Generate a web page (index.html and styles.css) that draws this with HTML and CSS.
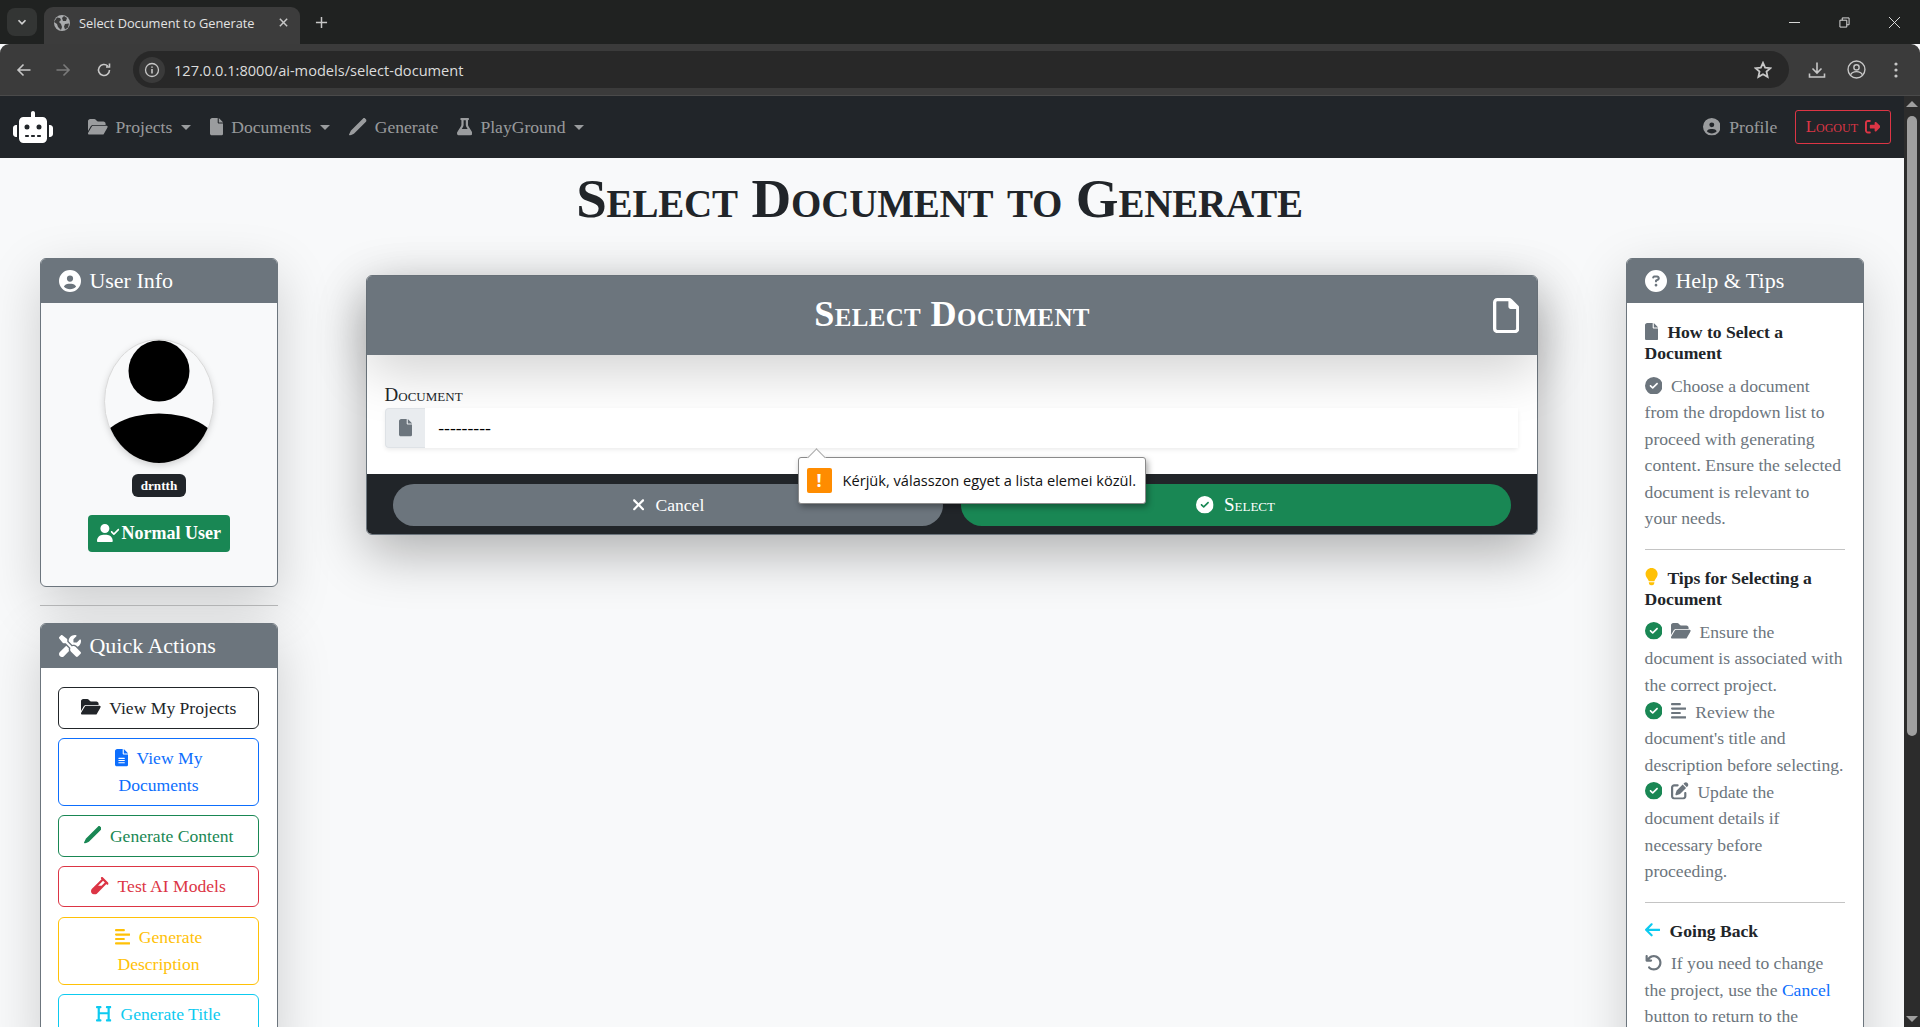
FILE: index.html
```html
<!DOCTYPE html>
<html lang="en">
<head>
<meta charset="utf-8">
<title>Select Document to Generate</title>
<link rel="stylesheet" href="styles.css">
</head>
<body>
<svg class="sprite" xmlns="http://www.w3.org/2000/svg">
<symbol id="file" viewBox="0 0 384 512"><path d="M0 64C0 28.7 28.7 0 64 0H224V128c0 17.7 14.3 32 32 32H384V448c0 35.3-28.7 64-64 64H64c-35.3 0-64-28.7-64-64V64zm384 64H256V0L384 128z"/></symbol>
<symbol id="file-o" viewBox="0 0 384 512"><path d="M320 464c8.8 0 16-7.2 16-16V160H256c-17.7 0-32-14.3-32-32V48H64c-8.8 0-16 7.2-16 16V448c0 8.8 7.2 16 16 16H320zM0 64C0 28.7 28.7 0 64 0H229.5c17 0 33.3 6.7 45.3 18.7l90.5 90.5c12 12 18.7 28.3 18.7 45.3V448c0 35.3-28.7 64-64 64H64c-35.3 0-64-28.7-64-64V64z"/></symbol>
<symbol id="folder" viewBox="0 0 576 512"><path d="M88.7 223.8L0 375.8V96C0 60.7 28.7 32 64 32H181.5c17 0 33.3 6.7 45.3 18.7l26.5 26.5c18 18 42.4 28.1 67.9 28.1H448c35.3 0 64 28.7 64 64v32H144c-22.8 0-43.8 12.1-55.3 31.8zm27.6 16.1C122.1 230 132.6 224 144 224H544c11.5 0 22 6.1 27.7 16.1s5.7 22.2-.1 32.1l-112 192C453.9 474 443.4 480 432 480H32c-11.5 0-22-6.1-27.7-16.1s-5.7-22.2 .1-32.1l112-192z"/></symbol>
<symbol id="user" viewBox="0 0 512 512"><path d="M399 384.2C376.9 345.8 335.4 320 288 320H224c-47.4 0-88.9 25.8-111 64.2c35.2 39.2 86.2 63.8 143 63.8s107.8-24.7 143-63.8zM0 256a256 256 0 1 1 512 0A256 256 0 1 1 0 256zm256 16a72 72 0 1 0 0-144 72 72 0 1 0 0 144z"/></symbol>
<symbol id="pen" viewBox="0 0 512 512"><path d="M410 11c16-15 41-15 57 0l34 34c15 16 15 41 0 57L150 453c-6 6-13 10-21 12L30 511C12 516-4 500 1 482l46-99c2-8 6-15 12-21L410 11z"/></symbol>
<symbol id="flask" viewBox="0 0 448 512"><path d="M288 0H160 128C110.3 0 96 14.3 96 32s14.3 32 32 32V196.8c0 11.8-3.3 23.5-9.5 33.5L10.3 406.2C3.6 417.2 0 429.7 0 442.6C0 480.9 31.1 512 69.4 512H378.6c38.3 0 69.4-31.1 69.4-69.4c0-12.8-3.6-25.4-10.3-36.4L329.5 230.4c-6.2-10.1-9.5-21.7-9.5-33.5V64c17.7 0 32-14.3 32-32s-14.3-32-32-32H288zM192 196.8V64h64V196.8c0 23.7 6.6 46.9 19 67.1L309.5 320h-171L173 263.9c12.4-20.2 19-43.4 19-67.1z"/></symbol>
<symbol id="robot" viewBox="0 0 640 512"><path d="M320 0c17.7 0 32 14.3 32 32V96H472c39.8 0 72 32.2 72 72V440c0 39.8-32.2 72-72 72H168c-39.8 0-72-32.2-72-72V168c0-39.8 32.2-72 72-72H288V32c0-17.7 14.3-32 32-32zM208 384c-8.8 0-16 7.2-16 16s7.2 16 16 16h32c8.8 0 16-7.2 16-16s-7.2-16-16-16H208zm96 0c-8.8 0-16 7.2-16 16s7.2 16 16 16h32c8.8 0 16-7.2 16-16s-7.2-16-16-16H304zm96 0c-8.8 0-16 7.2-16 16s7.2 16 16 16h32c8.8 0 16-7.2 16-16s-7.2-16-16-16H400zM264 256a40 40 0 1 0 -80 0 40 40 0 1 0 80 0zm152 40a40 40 0 1 0 0-80 40 40 0 1 0 0 80zM48 224H64V416H48c-26.5 0-48-21.5-48-48V272c0-26.5 21.5-48 48-48zm544 0c26.5 0 48 21.5 48 48v96c0 26.5-21.5 48-48 48H576V224h16z"/></symbol>
<symbol id="logout" viewBox="0 0 512 512"><path d="M377.9 105.9L500.7 228.7c7.2 7.2 11.3 17.1 11.3 27.3s-4.1 20.1-11.3 27.3L377.9 406.1c-6.4 6.4-15 9.9-24 9.9c-18.7 0-33.9-15.2-33.9-33.9l0-62.1-128 0c-17.7 0-32-14.3-32-32l0-64c0-17.7 14.3-32 32-32l128 0 0-62.1c0-18.7 15.2-33.9 33.9-33.9c9 0 17.6 3.6 24 9.9zM160 96L96 96c-17.7 0-32 14.3-32 32l0 256c0 17.7 14.3 32 32 32l64 0c17.7 0 32 14.3 32 32s-14.3 32-32 32l-64 0c-53 0-96-43-96-96L0 128C0 75 43 32 96 32l64 0c17.7 0 32 14.3 32 32s-14.3 32-32 32z"/></symbol>
<symbol id="check" viewBox="0 0 512 512"><path d="M256 512A256 256 0 1 0 256 0a256 256 0 1 0 0 512zM369 209L241 337c-9.4 9.4-24.6 9.4-33.9 0l-64-64c-9.4-9.4-9.4-24.6 0-33.9s24.6-9.4 33.9 0l47 47L335 175c9.4-9.4 24.6-9.4 33.9 0s9.4 24.6 0 33.9z"/></symbol>
<symbol id="question" viewBox="0 0 512 512"><path d="M256 512A256 256 0 1 0 256 0a256 256 0 1 0 0 512zM169.8 165.3c7.9-22.3 29.1-37.3 52.8-37.3h58.3c34.9 0 63.1 28.3 63.1 63.1c0 22.6-12.1 43.5-31.7 54.8L280 264.4c-.2 13-10.9 23.6-24 23.6c-13.3 0-24-10.7-24-24V250.5c0-8.6 4.6-16.5 12.1-20.8l44.3-25.4c4.7-2.7 7.6-7.7 7.6-13.1c0-8.4-6.8-15.1-15.1-15.1H222.6c-3.4 0-6.4 2.1-7.5 5.3l-.4 1.2c-4.4 12.5-18.2 19-30.6 14.6s-19-18.2-14.6-30.6l.4-1.2zM224 352a32 32 0 1 1 64 0 32 32 0 1 1 -64 0z"/></symbol>
<symbol id="xmark" viewBox="0 0 384 512"><path d="M342.6 150.6c12.5-12.5 12.5-32.8 0-45.3s-32.8-12.5-45.3 0L192 210.7 86.6 105.4c-12.5-12.5-32.8-12.5-45.3 0s-12.5 32.8 0 45.3L146.7 256 41.4 361.4c-12.5 12.5-12.5 32.8 0 45.3s32.8 12.5 45.3 0L192 301.3 297.4 406.6c12.5 12.5 32.8 12.5 45.3 0s12.5-32.8 0-45.3L237.3 256 342.6 150.6z"/></symbol>
<symbol id="user-check" viewBox="0 0 640 512"><path d="M96 128a128 128 0 1 1 256 0A128 128 0 1 1 96 128zM0 482.3C0 383.8 79.8 304 178.3 304h91.4C368.2 304 448 383.8 448 482.3c0 16.4-13.3 29.7-29.7 29.7H29.7C13.3 512 0 498.7 0 482.3zM625 177L497 305c-9.4 9.4-24.6 9.4-33.9 0l-64-64c-9.4-9.4-9.4-24.6 0-33.9s24.6-9.4 33.9 0l47 47L591 143c9.4-9.4 24.6-9.4 33.9 0s9.4 24.6 0 33.9z"/></symbol>
<symbol id="tools" viewBox="0 0 512 512"><path d="M78.6 5C69.1-2.4 55.6-1.5 47 7L7 47c-8.5 8.5-9.4 22-2.1 31.6l80 104c4.5 5.9 11.6 9.4 19 9.4h54.1l109 109c-14.7 29-10 65.4 14.3 89.6l112 112c12.5 12.5 32.8 12.5 45.3 0l64-64c12.5-12.5 12.5-32.8 0-45.3l-112-112c-24.2-24.2-60.6-29-89.6-14.3l-109-109V104c0-7.5-3.5-14.5-9.4-19L78.6 5zM19.9 396.1C7.2 408.8 0 426.1 0 444.1C0 481.6 30.4 512 67.9 512c18 0 35.3-7.2 48-19.9L233.7 374.3c-7.8-20.9-9-43.6-3.6-65.1l-61.7-61.7L19.9 396.1zM512 144c0-10.5-1.1-20.7-3.2-30.5c-2.4-11.2-16.1-14.1-24.2-6l-63.9 63.9c-3 3-7.1 4.7-11.3 4.7H352c-8.8 0-16-7.2-16-16V102.6c0-4.2 1.7-8.3 4.7-11.3l63.9-63.9c8.1-8.1 5.2-21.8-6-24.2C388.7 1.1 378.5 0 368 0C288.5 0 224 64.5 224 144l0 .8 85.3 85.3c36-9.1 75.8 .5 104 28.7L429 274.5c49-23 83-72.8 83-130.5z"/></symbol>
<symbol id="file-lines" viewBox="0 0 384 512"><path d="M64 0C28.7 0 0 28.7 0 64V448c0 35.3 28.7 64 64 64H320c35.3 0 64-28.7 64-64V160H256c-17.7 0-32-14.3-32-32V0H64zM256 0V128H384L256 0zM112 256H272c8.8 0 16 7.2 16 16s-7.2 16-16 16H112c-8.8 0-16-7.2-16-16s7.2-16 16-16zm0 64H272c8.8 0 16 7.2 16 16s-7.2 16-16 16H112c-8.8 0-16-7.2-16-16s7.2-16 16-16zm0 64H272c8.8 0 16 7.2 16 16s-7.2 16-16 16H112c-8.8 0-16-7.2-16-16s7.2-16 16-16z"/></symbol>
<symbol id="vial" viewBox="0 0 512 512"><path d="M342.6 9.4c-12.5-12.5-32.8-12.5-45.3 0s-12.5 32.8 0 45.3l9.4 9.4L28.1 342.6C10.1 360.6 0 385 0 410.5V416c0 53 43 96 96 96h5.5c25.5 0 49.9-10.1 67.9-28.1L448 205.3l9.4 9.4c12.5 12.5 32.8 12.5 45.3 0s12.5-32.8 0-45.3l-160-160zM205.3 256L352 109.3 402.7 160l-96 96H205.3z"/></symbol>
<symbol id="align" viewBox="0 0 448 512"><path d="M288 64c0 17.7-14.3 32-32 32H32C14.3 96 0 81.7 0 64S14.3 32 32 32H256c17.7 0 32 14.3 32 32zm0 256c0 17.7-14.3 32-32 32H32c-17.7 0-32-14.3-32-32s14.3-32 32-32H256c17.7 0 32 14.3 32 32zM0 192c0-17.7 14.3-32 32-32H416c17.7 0 32 14.3 32 32s-14.3 32-32 32H32c-17.7 0-32-14.3-32-32zM448 448c0 17.7-14.3 32-32 32H32c-17.7 0-32-14.3-32-32s14.3-32 32-32H416c17.7 0 32 14.3 32 32z"/></symbol>
<symbol id="heading" viewBox="0 0 448 512"><path d="M0 64C0 46.3 14.3 32 32 32H80h48c17.7 0 32 14.3 32 32s-14.3 32-32 32H112V208H336V96H320c-17.7 0-32-14.3-32-32s14.3-32 32-32h48 48c17.7 0 32 14.3 32 32s-14.3 32-32 32H400V240 416h16c17.7 0 32 14.3 32 32s-14.3 32-32 32H368 320c-17.7 0-32-14.3-32-32s14.3-32 32-32h16V272H112V416h16c17.7 0 32 14.3 32 32s-14.3 32-32 32H80 32c-17.7 0-32-14.3-32-32s14.3-32 32-32H48V240 96H32C14.3 96 0 81.7 0 64z"/></symbol>
<symbol id="bulb" viewBox="0 0 384 512"><path d="M272 384c9.6-31.9 29.5-59.1 49.2-86.2c5.2-7.1 10.4-14.2 15.4-21.4c19.8-28.5 31.4-63 31.4-100.3C368 78.8 289.2 0 192 0S16 78.8 16 176c0 37.3 11.6 71.9 31.4 100.3c5 7.2 10.2 14.3 15.4 21.4c19.8 27.1 39.7 54.4 49.2 86.2H272zM192 512c44.2 0 80-35.8 80-80V416H112v16c0 44.2 35.8 80 80 80z"/></symbol>
<symbol id="edit" viewBox="0 0 512 512"><path d="M471.6 21.7c-21.9-21.9-57.3-21.9-79.2 0L362.3 51.7l97.9 97.9 30.1-30.1c21.9-21.9 21.9-57.3 0-79.2L471.6 21.7zm-299.2 220c-6.1 6.1-10.8 13.6-13.5 21.9l-29.6 88.8c-2.9 8.6-.6 18.1 5.8 24.6s15.9 8.7 24.6 5.8l88.8-29.6c8.2-2.7 15.7-7.4 21.9-13.5L437.7 172.3 339.7 74.3 172.4 241.7zM96 64C43 64 0 107 0 160V416c0 53 43 96 96 96H352c53 0 96-43 96-96V320c0-17.7-14.3-32-32-32s-32 14.3-32 32v96c0 17.7-14.3 32-32 32H96c-17.7 0-32-14.3-32-32V160c0-17.7 14.3-32 32-32h96c17.7 0 32-14.3 32-32s-14.3-32-32-32H96z"/></symbol>
<symbol id="arrow-left" viewBox="0 0 448 512"><path d="M9.4 233.4c-12.5 12.5-12.5 32.8 0 45.3l160 160c12.5 12.5 32.8 12.5 45.3 0s12.5-32.8 0-45.3L109.2 288 416 288c17.7 0 32-14.3 32-32s-14.3-32-32-32l-306.7 0L214.6 118.6c12.5-12.5 12.5-32.8 0-45.3s-32.8-12.5-45.3 0l-160 160z"/></symbol>
<symbol id="undo" viewBox="0 0 512 512"><path d="M125.7 160H176c17.7 0 32 14.3 32 32s-14.3 32-32 32H48c-17.7 0-32-14.3-32-32V64c0-17.7 14.3-32 32-32s32 14.3 32 32v51.2L97.6 97.6c87.5-87.5 229.3-87.5 316.8 0s87.5 229.3 0 316.8s-229.3 87.5-316.8 0c-12.5-12.5-12.5-32.8 0-45.3s32.8-12.5 45.3 0c62.5 62.5 163.8 62.5 226.3 0s62.5-163.8 0-226.3s-163.8-62.5-226.3 0L125.7 160z"/></symbol>
</svg>

<div class="window">
  <header class="tabstrip">
    <div class="tab-search"><svg class="cicon" viewBox="0 0 16 16"><path d="M4 6l4 4 4-4" class="st2"/></svg></div>
    <div class="tab">
      <svg class="globe" viewBox="0 0 16 16"><circle cx="8" cy="8" r="8" fill="#a9abad"/><path d="M3 2.5l3 .5 1 2-2 2 2 2 1 3-1 3-3-3-1-3-3-2zM10 1l3 2-1 3h-3l-1-3zM11 9l4-.5-1 4-3 2-1-3z" fill="#3c3c3c"/></svg>
      <span class="tab-title">Select Document to Generate</span>
      <svg class="tab-x" viewBox="0 0 12 12"><path d="M2 2l8 8M10 2l-8 8" class="st15"/></svg>
    </div>
    <svg class="new-tab" viewBox="0 0 14 14"><path d="M7 1v12M1 7h12" class="st15"/></svg>
    <div class="winctl">
      <svg viewBox="0 0 12 12"><path d="M0 6h12" class="st1"/></svg>
      <svg viewBox="0 0 12 12"><path d="M1 3.5h7.5v7.5H1zM3.5 3.5V1H11v7.5H8.5" class="st1"/></svg>
      <svg viewBox="0 0 12 12"><path d="M0 0l12 12M12 0L0 12" class="st1"/></svg>
    </div>
  </header>
  <div class="toolbar">
    <svg class="tool" viewBox="0 0 16 16"><path d="M14.5 8H2M7.5 2.5L2 8l5.5 5.5" class="st15"/></svg>
    <svg class="tool dim" viewBox="0 0 16 16"><path d="M1.5 8H14M8.5 2.5L14 8l-5.5 5.5" class="st15"/></svg>
    <svg class="tool tool-reload" viewBox="0 0 16 16"><path d="M13.5 8a5.5 5.5 0 1 1-1.7-4M13.5 1.5V5H10" class="st15"/></svg>
    <div class="omnibox">
      <span class="site-info"><svg viewBox="0 0 16 16"><circle cx="8" cy="8" r="6.5" class="st12"/><path d="M8 7v4.5M8 4.4v1.3" class="st15"/></svg></span>
      <span class="url">127.0.0.1:8000/ai-models/select-document</span>
      <svg class="star" viewBox="0 0 16 16"><path d="M8 1.6l1.9 4.3 4.6.5-3.4 3.1 1 4.6L8 11.8l-4.1 2.3 1-4.6L1.500 6.400l4.600-.5z" class="st15"/></svg>
    </div>
    <svg class="tool tool-dl" viewBox="0 0 18 18"><path d="M9 1.500v10M4.500 7.500L9 12l4.500-4.500M1.500 12.500v3.500h15v-3.500" class="st15"/></svg>
    <svg class="tool tool-pr" viewBox="0 0 18 18"><circle cx="9" cy="9" r="8" class="st12"/><circle cx="9" cy="7" r="2.500" class="st12"/><path d="M3.500 14c1-2.500 3-3 5.500-3s4.500.5 5.500 3" class="st12"/></svg>
    <svg class="tool tool-me" viewBox="0 0 4 18"><circle cx="2" cy="3" r="1.600" fill="#c7c7c7"/><circle cx="2" cy="9" r="1.600" fill="#c7c7c7"/><circle cx="2" cy="15" r="1.600" fill="#c7c7c7"/></svg>
  </div>

  <div class="viewport">
    <div class="page">
      <nav class="navbar">
        <svg class="logo"><use href="#robot"/></svg>
        <ul class="nav-list">
          <li class="nav-item"><svg class="i w576"><use href="#folder"/></svg>Projects<span class="caret"></span></li>
          <li class="nav-item"><svg class="i w384"><use href="#file"/></svg>Documents<span class="caret"></span></li>
          <li class="nav-item"><svg class="i w512"><use href="#pen"/></svg>Generate</li>
          <li class="nav-item"><svg class="i w448"><use href="#flask"/></svg>PlayGround<span class="caret"></span></li>
        </ul>
        <div class="nav-right">
          <span class="nav-item"><svg class="i w512"><use href="#user"/></svg>Profile</span>
          <span class="logout">Logout<svg class="i w512"><use href="#logout"/></svg></span>
        </div>
      </nav>
      <main class="content">
        <h1 class="page-title">Select Document to Generate</h1>
        <div class="layout">
          <aside class="side">
            <section class="card card-light">
              <div class="card-head"><svg class="i w512"><use href="#user"/></svg>User Info</div>
              <div class="user-body">
                <svg class="avatar" viewBox="0 0 110 125"><defs><clipPath id="av"><ellipse cx="55" cy="62.500" rx="54" ry="61.500"/></clipPath></defs><ellipse cx="55" cy="62.500" rx="54.500" ry="62" fill="#f8f9fa" stroke="#d9d9d9" stroke-width="1"/><g clip-path="url(#av)"><circle cx="55" cy="32" r="30.500"/><ellipse cx="55" cy="112" rx="62" ry="37.500"/></g></svg>
                <span class="name-badge">drntth</span>
                <span class="role-badge"><svg class="i w640"><use href="#user-check"/></svg>Normal User</span>
              </div>
            </section>
            <hr class="side-rule">
            <section class="card">
              <div class="card-head"><svg class="i w512"><use href="#tools"/></svg>Quick Actions</div>
              <div class="actions">
                <a class="act act-dark"><svg class="i w576"><use href="#folder"/></svg>View My Projects</a>
                <a class="act act-blue"><svg class="i w384"><use href="#file-lines"/></svg>View My Documents</a>
                <a class="act act-green"><svg class="i w512"><use href="#pen"/></svg>Generate Content</a>
                <a class="act act-red"><svg class="i w512"><use href="#vial"/></svg>Test AI Models</a>
                <a class="act act-yellow"><svg class="i w448"><use href="#align"/></svg>Generate Description</a>
                <a class="act act-cyan"><svg class="i w448"><use href="#heading"/></svg>Generate Title</a>
              </div>
            </section>
          </aside>

          <section class="select-card">
            <div class="select-head">
              <h2 class="select-title">Select Document</h2>
              <svg class="select-icon"><use href="#file-o"/></svg>
            </div>
            <div class="select-body">
              <label class="field-label">Document</label>
              <div class="field">
                <span class="addon"><svg class="i w384"><use href="#file"/></svg></span>
                <span class="select-box">---------</span>
                <div class="tooltip">
                  <span class="tip-icon">!</span>
                  <span>Kérjük, válasszon egyet a lista elemei közül.</span>
                </div>
              </div>
            </div>
            <div class="select-foot">
              <a class="pill pill-gray"><svg class="i w384"><use href="#xmark"/></svg>Cancel</a>
              <a class="pill pill-green"><svg class="i w512"><use href="#check"/></svg>Select</a>
            </div>
          </section>

          <aside class="side">
            <section class="card">
              <div class="card-head"><svg class="i w512"><use href="#question"/></svg>Help &amp; Tips</div>
              <div class="help">
                <h6 class="help-h"><svg class="i w384 gray"><use href="#file"/></svg>How to Select a Document</h6>
                <p class="help-p"><svg class="i w512"><use href="#check"/></svg>Choose a document from the dropdown list to proceed with generating content. Ensure the selected document is relevant to your needs.</p>
                <hr class="help-rule">
                <h6 class="help-h"><svg class="i w384 yellow"><use href="#bulb"/></svg>Tips for Selecting a Document</h6>
                <ul class="help-list">
                  <li><svg class="i w512 green"><use href="#check"/></svg><svg class="i w576"><use href="#folder"/></svg>Ensure the document is associated with the correct project.</li>
                  <li><svg class="i w512 green"><use href="#check"/></svg><svg class="i w448"><use href="#align"/></svg>Review the document's title and description before selecting.</li>
                  <li><svg class="i w512 green"><use href="#check"/></svg><svg class="i w512"><use href="#edit"/></svg>Update the document details if necessary before proceeding.</li>
                </ul>
                <hr class="help-rule">
                <h6 class="help-h"><svg class="i w448 cyan"><use href="#arrow-left"/></svg>Going Back</h6>
                <p class="help-p"><svg class="i w512"><use href="#undo"/></svg>If you need to change the project, use the <a class="help-link">Cancel</a> button to return to the previous page.</p>
              </div>
            </section>
          </aside>
        </div>
      </main>
    </div>
    <div class="scrollbar">
      <span class="sb-up"></span>
      <span class="sb-thumb"></span>
      <span class="sb-down"></span>
    </div>
  </div>
</div>
</body>
</html>
```
FILE: styles.css
```css
* { box-sizing: border-box; }
html, body { margin: 0; height: 100%; overflow: hidden; }
body { font-family: "Liberation Serif", serif; font-size: 17.6px; line-height: 26.4px; color: #212529; background: #f8f9fa; }
.sprite { display: none; }
.window { height: 100vh; display: flex; flex-direction: column; overflow: hidden; }

/* browser chrome */
.tabstrip { height: 44px; background: #202221; display: flex; align-items: flex-end; padding-left: 7px; flex: none; }
.tab-search { width: 30px; height: 28px; margin-bottom: 8px; background: #333534; border-radius: 8px; display: flex; align-items: center; justify-content: center; }
.cicon { width: 14px; height: 14px; }
.tab { width: 256px; height: 37px; margin-left: 7px; background: #3c3c3c; border-radius: 9px 9px 0 0; display: flex; align-items: center; padding: 0 11px 6px 10px; }
.globe { width: 16px; height: 16px; flex: none; }
.tab-title { font: 12.8px/16px "Open Sans", sans-serif; color: #e3e3e3; margin-left: 9px; flex: 1; white-space: nowrap; }
.tab-x { width: 11px; height: 11px; }
.new-tab { width: 13px; height: 13px; margin: 0 0 15px 15px; }
.winctl { margin-left: auto; display: flex; gap: 39px; padding: 0 20px 16px 0; align-self: flex-end; }
.winctl svg { width: 11px; height: 11px; }
.st1 { fill: none; stroke: #e8e8e8; stroke-width: 1; }
.st12 { fill: none; stroke: #c7c7c7; stroke-width: 1.3; }
.st15 { fill: none; stroke: #c7c7c7; stroke-width: 1.600; }
.st2 { fill: none; stroke: #d0d0d0; stroke-width: 2; }
.toolbar { height: 52px; flex: none; background: #3b3b3b; border-bottom: 1px solid #4a4a4a; border-radius: 9px 9px 0 0; display: flex; align-items: center; padding: 0 0 0 16px; }
.tool { width: 16px; height: 16px; flex: none; margin-right: 23px; }
.tool.dim { opacity: .45; }
.tool-reload { margin-left: 2px; }
.omnibox { width: 1656px; height: 37px; margin-left: -2px; background: #282828; border-radius: 19px; display: flex; align-items: center; padding: 0 17px 0 6px; }
.site-info { width: 26px; height: 26px; border-radius: 50%; background: #3a3a3a; display: flex; align-items: center; justify-content: center; }
.site-info svg { width: 16px; height: 16px; }
.url { font: 14.6px/20px "Open Sans", sans-serif; color: #dcdcdc; margin-left: 9px; flex: 1; }
.star { width: 18px; height: 18px; }
.tool-dl { width: 18px; height: 18px; margin: 0 0 0 19px; }
.tool-pr { width: 19px; height: 19px; margin: 0 0 0 21px; }
.tool-me { width: 4px; height: 18px; margin: 0 0 0 28px; }

/* viewport */
.viewport { flex: 1; display: flex; min-height: 0; }
.page { flex: 1; min-width: 0; overflow: hidden; }
.scrollbar { width: 16px; flex: none; background: #2c2c2c; display: flex; flex-direction: column; align-items: center; padding: 5px 0 3px; }
.sb-up { border: 6px solid transparent; border-top: 0; border-bottom: 6px solid #9f9f9f; }
.sb-thumb { width: 10px; height: 620px; margin-top: 9px; background: #9f9f9f; border-radius: 5px; }
.sb-down { margin-top: auto; margin-bottom: 2px; border: 6px solid transparent; border-bottom: 0; border-top: 6px solid #9f9f9f; }

/* navbar */
.navbar { height: 62px; background: #212529; display: flex; align-items: center; padding: 0 13px; color: rgba(255,255,255,.55); }
.logo { width: 40px; height: 32px; fill: #fff; flex: none; }
.nav-list { list-style: none; margin: 0 0 0 25.4px; padding: 0; display: flex; }
.nav-item { display: flex; align-items: center; padding: 0 9.4px; white-space: nowrap; }
.nav-item .i { margin-right: 8px; }
.caret { margin-left: 9px; border: 5.280px solid transparent; border-bottom: 0; border-top-color: currentColor; }
.nav-right { margin-left: auto; display: flex; align-items: center; }
.nav-right .nav-item { padding: 0 8.8px; }
.nav-right .i { margin-right: 9px; }
.logout { width: 96px; height: 34px; margin-left: 9px; border: 1px solid #dc3545; border-radius: 3px; color: #dc3545; font-variant: small-caps; font-size: 16.940px; display: flex; align-items: center; justify-content: center; gap: 7px; }
.logout .i { font-size: 15.4px; margin: 0; }
.i { height: 1em; fill: currentColor; flex: none; vertical-align: -.125em; display: inline-block; }
.w384 { width: .75em; }
.w448 { width: .875em; }
.w512 { width: 1em; }
.w576 { width: 1.125em; }
.w640 { width: 1.250em; }

/* content */
.page-title { margin: 0 25px 0 0; padding-top: 9px; height: 100px; text-align: center; font-size: 55px; letter-spacing: -0.18px; line-height: 63px; font-variant: small-caps; font-weight: 700; color: #212529; white-space: nowrap; }
.layout { display: grid; grid-template-columns: 238px 1fr 238px; column-gap: 88px; padding: 0 40px; align-items: start; }
.card { border: 1px solid #6c757d; border-radius: 6px; background: #fff; box-shadow: 0 17.600px 52.800px rgba(0,0,0,.175); overflow: hidden; }
.card-light { background: #f8f9fa; }
.card-head { background: #6c757d; color: #fff; font-size: 22px; line-height: 26.400px; padding: 8.800px 17.600px 9px; display: flex; align-items: center; gap: 8.800px; }
.user-body { height: 282.8px; padding-top: 36px; display: flex; flex-direction: column; align-items: center; }
.avatar { width: 110px; height: 125px; flex: none; filter: drop-shadow(0 2px 3px rgba(0,0,0,.15)); }
.name-badge { margin-top: 10px; background: #212529; color: #fff; font-size: 13.200px; font-weight: 700; line-height: 13.200px; padding: 4.600px 8.580px; border-radius: 6px; }
.role-badge { margin-top: 18px; background: #198754; color: #fff; font-size: 18px; font-weight: 700; padding: 5.300px 8.800px; border-radius: 4px; display: flex; align-items: center; }
.role-badge .i { margin-right: 2px; }
.side-rule { margin: 17.600px 0; border: 0; border-top: 1px solid #b5b6b7; }
.actions { padding: 18.6px 18.1px 17.6px 17.1px; display: flex; flex-direction: column; gap: 9.2px; }
.act { display: block; padding: 6.600px 17.6px; border: 1px solid; border-radius: 6px; text-align: center; }
.act .i { margin-right: 8.800px; }
.act-dark { color: #212529; border-color: #212529; }
.act-blue { color: #0d6efd; border-color: #0d6efd; }
.act-green { color: #198754; border-color: #198754; }
.act-red { color: #dc3545; border-color: #dc3545; }
.act-yellow { color: #ffc107; border-color: #ffc107; }
.act-cyan { color: #0dcaf0; border-color: #0dcaf0; }

/* select card */
.select-card { position: relative; margin-top: 17px; border: 1px solid #6c757d; border-radius: 6px; background: #fff; box-shadow: 0 17.600px 52.800px rgba(0,0,0,.3); }
.select-head { position: relative; z-index: 1; height: 79px; background: #6c757d; color: #fff; display: grid; grid-template-columns: 1fr auto 1fr; align-items: center; padding: 0 17.600px; border-radius: 5px 5px 0 0; box-shadow: 0 17.600px 52.800px rgba(0,0,0,.175); }
.select-title { grid-column: 2; margin: 0 0 3px; font-size: 36.2px; letter-spacing: .33px; line-height: 42px; font-weight: 700; font-variant: small-caps; white-space: nowrap; }
.select-icon { grid-column: 3; justify-self: end; width: 26.400px; height: 35.200px; fill: #fff; }
.select-body { position: relative; z-index: 2; padding: 26.400px 18.600px 26px 17.600px; }
.field-label { display: block; padding-top: 1px; font-variant: small-caps; font-size: 19px; line-height: 25.4px; }
.field { position: relative; display: flex; height: 40px; border-radius: 4px; box-shadow: 0 2px 4px rgba(0,0,0,.075); }
.addon { width: 40px; background: #e9ecef; border: 1px solid #dee2e6; border-right: 0; border-radius: 4px 0 0 4px; color: #6c757d; display: flex; align-items: center; justify-content: center; }
.select-box { flex: 1; background: #fff; padding: 0 13.6px; color: #000; line-height: 40px; }
.tooltip { position: absolute; left: 413px; top: 49px; width: 348px; height: 47px; background: #fff; border: 1px solid #8a8a8a; border-radius: 3px; box-shadow: 2px 3px 6px rgba(0,0,0,.35); display: flex; align-items: center; gap: 11px; padding: 0 8px; font: 14.6px/20px "Open Sans", sans-serif; color: #111; white-space: nowrap; }
.tooltip::before { content: ""; position: absolute; left: 11px; top: -7px; width: 12px; height: 12px; background: #fff; border-left: 1px solid #aaa; border-top: 1px solid #aaa; transform: rotate(45deg); }
.tip-icon { width: 25px; height: 25px; flex: none; background: #ff8c00; border-radius: 2px; color: #fff; font: 700 18px/25px "Open Sans", sans-serif; text-align: center; }
.select-foot { position: relative; z-index: 1; height: 60px; background: #212529; border-radius: 0 0 5px 5px; display: grid; grid-template-columns: 1fr 1fr; column-gap: 17.600px; padding: 10px 26.400px 8px; }
.pill { display: flex; align-items: center; justify-content: center; gap: 10px; color: #fff; border-radius: 21px; }
.pill .i { font-size: 17.6px; }
.pill-gray { background: #6c757d; }
.pill-green { background: #198754; font-variant: small-caps; font-size: 19px; }

/* help */
.help { padding: 18.8px 17.600px 17.6px; }
.help-h { margin: 0 0 8.800px; font-size: 17.600px; line-height: 21.120px; font-weight: 700; }
.help-h .i { margin-right: 9.6px; }
.help-p { margin: 0 0 17.600px; color: #6c757d; }
.help-p .i { margin-right: 8.800px; }
.help-rule { margin: 17.600px 0; border: 0; border-top: 1px solid #c4c4c4; }
.help-list { margin: 0 0 17.600px; padding: 0; list-style: none; color: #6c757d; }
.help-list li + li { margin-top: .8px; }
.help-list .i { margin-right: 8.800px; }
.help-link { color: #0d6efd; }
.gray { color: #6c757d; }
.yellow { color: #ffc107; }
.green { color: #198754; }
.cyan { color: #0dcaf0; }
```
